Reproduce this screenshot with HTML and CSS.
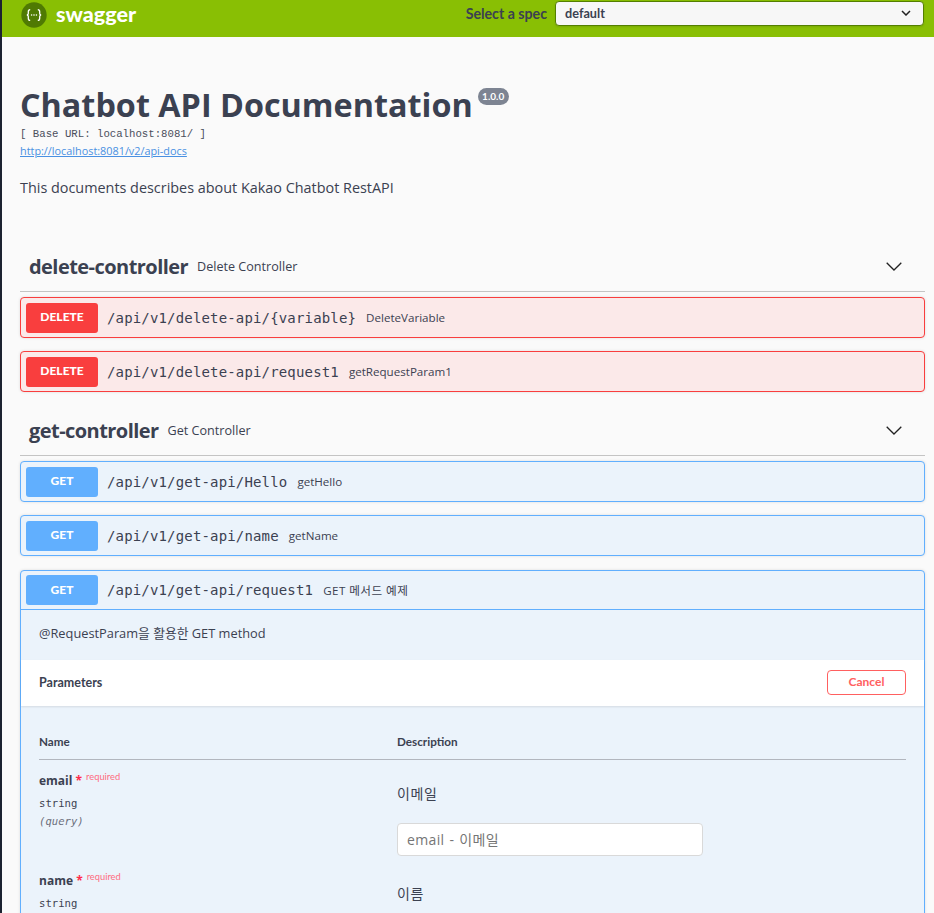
FILE: index.html
```html
<!DOCTYPE html>
<html lang="en">
<head>
<meta charset="utf-8">
<title>Swagger UI</title>
<link rel="stylesheet" href="styles.css">
</head>
<body>
<div class="page">
  <header class="topbar">
    <a class="brand">
      <svg class="logo" viewBox="0 0 26 26" width="26" height="26" aria-hidden="true">
        <circle cx="13" cy="13" r="12.7" fill="#4f7a03"/>
        <path d="M9.2 7.6c-1.800 0-1.900 1-1.900 2.200v1.700c0 1-.6 1.400-1.400 1.500.8.1 1.400.5 1.400 1.500v1.700c0 1.200.1 2.200 1.900 2.200M16.800 7.600c1.800 0 1.900 1 1.900 2.200v1.700c0 1 .6 1.400 1.400 1.500-.8.1-1.400.5-1.400 1.500v1.700c0 1.200-.1 2.200-1.900 2.200" fill="none" stroke="#fff" stroke-width="1.300"/>
        <circle cx="10.600" cy="13" r=".8" fill="#fff"/><circle cx="13" cy="13" r=".8" fill="#fff"/><circle cx="15.400" cy="13" r=".8" fill="#fff"/>
      </svg>
      <span class="brand-name">swagger</span>
    </a>
    <label class="spec-label">Select a spec</label>
    <div class="spec-select">
      <span>default</span>
      <svg class="select-chevron" viewBox="0 0 10 6" width="10" height="6" aria-hidden="true"><path d="M1 1l4 4 4-4" fill="none" stroke="#222" stroke-width="1.500"/></svg>
    </div>
  </header>

  <main class="content">
    <section class="info">
      <h1 class="title">Chatbot API Documentation<span class="version">1.0.0</span></h1>
      <p class="base-url">[ Base URL: localhost:8081/ ]</p>
      <a class="docs-link" href="#">http://localhost:8081/v2/api-docs</a>
      <p class="description">This documents describes about Kakao Chatbot RestAPI</p>
    </section>

    <section class="tag tag-first">
      <div class="tag-head">
        <h2 class="tag-name">delete-controller</h2>
        <span class="tag-desc">Delete Controller</span>
        <svg class="tag-arrow" viewBox="0 0 16 9" width="16" height="9" aria-hidden="true"><path d="M.7.7L8 8l7.300-7.300" fill="none" stroke="#222" stroke-width="1.300"/></svg>
      </div>
      <div class="op op-delete">
        <div class="op-summary"><span class="method">DELETE</span><span class="path">/api/v1/delete-api/{variable}</span><span class="op-desc">DeleteVariable</span></div>
      </div>
      <div class="op op-delete">
        <div class="op-summary"><span class="method">DELETE</span><span class="path">/api/v1/delete-api/request1</span><span class="op-desc">getRequestParam1</span></div>
      </div>
    </section>

    <section class="tag">
      <div class="tag-head">
        <h2 class="tag-name">get-controller</h2>
        <span class="tag-desc">Get Controller</span>
        <svg class="tag-arrow" viewBox="0 0 16 9" width="16" height="9" aria-hidden="true"><path d="M.7.7L8 8l7.300-7.300" fill="none" stroke="#222" stroke-width="1.300"/></svg>
      </div>
      <div class="op op-get">
        <div class="op-summary"><span class="method">GET</span><span class="path">/api/v1/get-api/Hello</span><span class="op-desc">getHello</span></div>
      </div>
      <div class="op op-get">
        <div class="op-summary"><span class="method">GET</span><span class="path">/api/v1/get-api/name</span><span class="op-desc">getName</span></div>
      </div>
      <div class="op op-get op-open">
        <div class="op-summary op-summary-open"><span class="method">GET</span><span class="path">/api/v1/get-api/request1</span><span class="op-desc op-desc-ko">GET 메서드 예제</span></div>
        <p class="op-note">@RequestParam을 활용한 GET method</p>
        <div class="params-bar">
          <h4 class="params-title">Parameters</h4>
          <button class="cancel">Cancel</button>
        </div>
        <div class="params">
          <div class="params-row params-head">
            <div>Name</div>
            <div>Description</div>
          </div>
          <div class="params-row param">
            <div>
              <div class="param-name">email <span class="star">*</span><sup class="req">required</sup></div>
              <div class="param-type">string</div>
              <div class="param-in">(query)</div>
            </div>
            <div>
              <p class="param-desc">이메일</p>
              <div class="param-input">email - 이메일</div>
            </div>
          </div>
          <div class="params-row param">
            <div>
              <div class="param-name">name <span class="star">*</span><sup class="req">required</sup></div>
              <div class="param-type">string</div>
            </div>
            <div>
              <p class="param-desc">이름</p>
            </div>
          </div>
        </div>
      </div>
    </section>
  </main>
</div>
</body>
</html>
```
FILE: styles.css
```css
* { box-sizing: border-box; }
html, body { margin: 0; padding: 0; height: 100%; }
body { background: #1c2230; font-family: "Open Sans", "Noto Sans CJK KR", sans-serif; color: #3b4151; }
.page { margin-left: 2px; height: 913px; overflow: hidden; background: #fafafa; }

.topbar { height: 37px; background: #89bf04; display: flex; align-items: flex-start; padding: 1px 10px 0 19px; }
.brand { display: flex; align-items: center; gap: 9px; margin: 1px auto 0 0; }
.logo { display: block; }
.brand-name { font-family: Lato, sans-serif; font-weight: 900; font-size: 21.500px; color: #fff; line-height: 26px; position: relative; top: -1px; }
.spec-label { font-family: Lato, sans-serif; font-weight: 700; font-size: 14.200px; line-height: 25px; color: #3b4151; margin-right: 8px; }
.spec-select { width: 369px; height: 25px; border: 1px solid #547f00; border-radius: 4px; background: #f7f7f7; display: flex; align-items: center; justify-content: space-between; padding: 0 10px 1px 9px; font-family: Lato, sans-serif; font-weight: 700; font-size: 12.700px; color: #3b4151; box-shadow: 0 1px 2px rgba(0,0,0,.1); }
.select-chevron { margin-right: 2px; }

.content { padding: 0 9px 0 18px; }
.info { padding-top: 48px; }
.title { margin: 0; font-size: 32.350px; font-weight: 700; line-height: 38px; color: #3b4151; display: flex; align-items: flex-start; }
.version { margin: 3px 0 0 5px; width: 31px; height: 17px; border-radius: 57px; background: #7d8492; color: #fff; font-family: Lato, sans-serif; font-size: 10px; font-weight: 700; line-height: 17px; text-align: center; }
.base-url { margin: 3px 0 0; font-family: "Liberation Mono", monospace; font-size: 10.700px; line-height: 16px; color: #4a4f5c; }
.docs-link { display: block; margin-top: 1px; font-size: 10.850px; line-height: 15px; color: #4990e2; text-decoration: underline; }
.description { margin: 20px 0 0; font-size: 14.400px; line-height: 20px; color: #3b4151; }

.tag-first { margin-top: 44px; }
.tag + .tag { margin-top: 14px; }
.tag-head { height: 50px; display: flex; align-items: center; gap: 9px; padding: 0 23px 0 9px; border-bottom: 1px solid #c4c4c4; margin-bottom: 5px; }
.tag-name { margin: 0; font-family: "Open Sans", sans-serif; font-size: 20px; font-weight: 700; letter-spacing: -.55px; color: #3b4151; line-height: 26px; }
.tag-desc { font-size: 12.600px; color: #3b4151; flex: 1; }
.tag-arrow { display: block; }

.op { border: 1px solid; border-radius: 4px; margin-bottom: 13px; box-shadow: 0 0 3px rgba(0,0,0,.12); }
.op-delete { background: #fbe9e9; border-color: #f93e3e; }
.op-get { background: #ebf3fb; border-color: #61affe; }
.op-summary { height: 39px; display: flex; align-items: center; padding: 0 5px; }
.method { width: 72px; height: 30px; border-radius: 3px; color: #fff; display: flex; align-items: center; justify-content: center; font-family: Lato, sans-serif; font-size: 12px; font-weight: 900; padding-bottom: 2px; }
.op-delete .method { background: #f93e3e; }
.op-get .method { background: #61affe; }
.path { margin-left: 9px; font-family: "DejaVu Sans Mono", monospace; font-size: 14px; color: #3b4151; letter-spacing: .16px; }
.op-desc { margin-left: 10px; font-size: 11.600px; color: #3b4151; }
.op-desc-ko { letter-spacing: .45px; }

.op-open { margin: 14px 0 0; }
.op-summary-open { height: 39px; border-bottom: 1px solid #61affe; }
.op-note { margin: 0; height: 50px; padding: 14px 18px 0; font-size: 12.800px; line-height: 18px; color: #3b4151; }
.params-bar { height: 46px; background: #fff; display: flex; align-items: center; justify-content: space-between; padding: 0 18px 2px; box-shadow: 0 1px 2px rgba(0,0,0,.1); }
.params-title { margin: 0; font-family: Lato, sans-serif; font-size: 12.500px; font-weight: 700; color: #3b4151; }
.cancel { width: 79px; height: 25px; border: 1.500px solid #ff6060; border-radius: 4px; background: transparent; color: #ff6060; font-family: Lato, sans-serif; font-size: 12px; font-weight: 700; padding: 0 0 2px; }
.params { padding: 20px 18px 0; }
.params-row { display: grid; grid-template-columns: 358px 1fr; }
.params-head { height: 34px; align-items: center; padding-bottom: 3px; border-bottom: 1px solid #b2b6be; font-family: Lato, sans-serif; font-size: 11.700px; font-weight: 700; color: #3b4151; }
.param { padding-top: 10px; height: 100px; }
.param-name { font-family: "Open Sans", sans-serif; font-size: 12px; font-weight: 700; line-height: 21px; height: 21px; }
.star { color: #ff2b4a; }
.req { font-family: Lato, sans-serif; font-size: 9.300px; font-weight: 400; color: #ff6b80; margin-left: 4px; position: relative; top: 0; vertical-align: top; line-height: 14px; }
.param-type { margin-top: 3px; font-family: "DejaVu Sans Mono", monospace; font-size: 10.600px; line-height: 18px; }
.param-in { font-family: "DejaVu Sans Mono", monospace; font-size: 10.600px; font-style: italic; line-height: 18px; color: #6b6f7b; }
.param-desc { margin: 14px 0 0; font-size: 14px; line-height: 20px; letter-spacing: .6px; }
.param-input { margin-top: 19px; width: 306px; height: 33px; border: 1px solid #d9d9d9; border-radius: 4px; background: #fff; padding: 0 9px; font-size: 14px; line-height: 31px; color: #757575; word-spacing: 1px; letter-spacing: .35px; }
```
